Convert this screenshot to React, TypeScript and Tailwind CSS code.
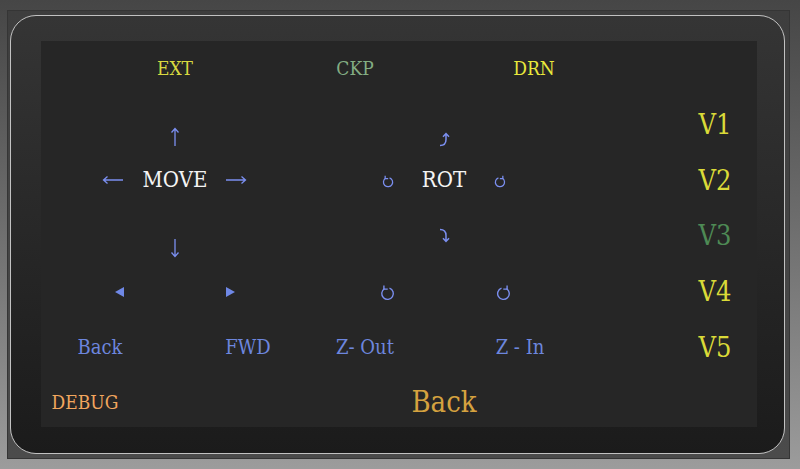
import type { ReactNode } from 'react';

const ARROW = '#7b8ff0';

const Cell = ({ className, children }: { className: string; children: ReactNode }) => (
  <div className={`flex items-center justify-center whitespace-nowrap leading-none ${className}`}>
    {children}
  </div>
);

const ArrowH = ({ dir }: { dir: 'left' | 'right' }) => (
  <svg width="22" height="10" viewBox="0 0 22 10" fill="none" stroke={ARROW} strokeWidth="1.3">
    <g transform={dir === 'right' ? 'matrix(-1 0 0 1 22 0)' : undefined}>
      <path d="M21 5H1.5M5.5 1.5 1.5 5l4 3.5" />
    </g>
  </svg>
);

const ArrowV = ({ dir }: { dir: 'up' | 'down' }) => (
  <svg width="10" height="20" viewBox="0 0 10 20" fill="none" stroke={ARROW} strokeWidth="1.3">
    <g transform={dir === 'down' ? 'matrix(1 0 0 -1 0 20)' : undefined}>
      <path d="M5 19V1.5M1.5 5.5 5 1.5l3.5 4" />
    </g>
  </svg>
);

const Curl = ({ dir }: { dir: 'up' | 'down' }) => (
  <svg width="12" height="15" viewBox="0 0 12 15" fill="none" stroke={ARROW} strokeWidth="1.5">
    <g transform={dir === 'down' ? 'matrix(1 0 0 -1 0 15)' : undefined}>
      <path d="M2 13.5c4 0 6-2.5 6-6V2M5 4.8 8 1.6l3 3.2" />
    </g>
  </svg>
);

const Spin = ({ flip, size }: { flip?: boolean; size: 'sm' | 'lg' }) => (
  <svg
    width={size === 'lg' ? 15 : 12}
    height={size === 'lg' ? 19 : 15}
    viewBox="0 0 14 18"
    fill="none"
    stroke={ARROW}
    strokeWidth={size === 'lg' ? 1.3 : 1.5}
  >
    <g transform={flip ? 'matrix(-1 0 0 1 14 0)' : undefined}>
      <path d="M8.9 5.8A5.5 5.5 0 1 1 4 6.4" />
      <path d="M3.6 3.2v3.6h3.6" />
    </g>
  </svg>
);

const Tri = ({ dir }: { dir: 'left' | 'right' }) => (
  <svg width="9" height="10" viewBox="0 0 9 10">
    <polygon points={dir === 'left' ? '9,0 9,10 0,5' : '0,0 0,10 9,5'} fill="#6f88e6" />
  </svg>
);

const serif = "font-['DejaVu_Serif_Condensed','DejaVu_Serif',serif] font-stretch-condensed";

export default function App() {
  return (
    <div className="h-[469px] w-full overflow-hidden bg-linear-to-b from-[#464646] to-[#9c9c9c] pl-[7px] pt-[10px]">
      <div className="h-[449px] w-[783px] border border-[#353535] bg-linear-to-b from-[#3e3e3e] to-[#4b4b4b] pl-[2px] pt-[4px]">
        <div className="h-[439px] w-[775px] rounded-[26px] border border-[#c2c2c2] bg-linear-to-b from-[#353535] to-[#1b1b1b] pl-[30px] pt-[25px]">
          <div className="h-[386px] w-[716px] bg-[#262626]">
            <div
              className={`grid grid-cols-[24px_70px_5px_70px_3px_70px_47px_70px_9px_70px_6px_70px_125px_70px] grid-rows-[repeat(7,55.7px)] ${serif}`}
            >
              {/* row 1 */}
              <Cell className="col-start-4 row-start-1 text-[19px] text-[#d8d840]">EXT</Cell>
              <Cell className="col-start-8 row-start-1 -translate-x-[10px] text-[19px] text-[#83ad83]">CKP</Cell>
              <Cell className="col-start-12 row-start-1 translate-x-[14px] text-[19px] text-[#e8e83c]">DRN</Cell>

              {/* row 2 */}
              <Cell className="col-start-4 row-start-2 translate-y-[12px]">
                <ArrowV dir="up" />
              </Cell>
              <Cell className="col-start-10 row-start-2 translate-y-[15px]">
                <Curl dir="up" />
              </Cell>
              <Cell className="col-start-14 row-start-2 text-[27px] text-[#dada38]">V1</Cell>

              {/* row 3 */}
              <Cell className="col-start-2 row-start-3 translate-x-[13px]">
                <ArrowH dir="left" />
              </Cell>
              <Cell className="col-start-4 row-start-3 text-[22px] text-[#f4f4f4]">MOVE</Cell>
              <Cell className="col-start-6 row-start-3 -translate-x-[12px]">
                <ArrowH dir="right" />
              </Cell>
              <Cell className="col-start-8 row-start-3 translate-x-[23px]">
                <Spin size="sm" />
              </Cell>
              <Cell className="col-start-10 row-start-3 text-[22px] text-[#f4f4f4]">ROT</Cell>
              <Cell className="col-start-12 row-start-3 -translate-x-[20px]">
                <Spin size="sm" flip />
              </Cell>
              <Cell className="col-start-14 row-start-3 text-[27px] text-[#dada38]">V2</Cell>

              {/* row 4 */}
              <Cell className="col-start-4 row-start-4 translate-y-[12px]">
                <ArrowV dir="down" />
              </Cell>
              <Cell className="col-start-10 row-start-4">
                <Curl dir="down" />
              </Cell>
              <Cell className="col-start-14 row-start-4 text-[27px] text-[#4e8a55]">V3</Cell>

              {/* row 5 */}
              <Cell className="col-start-2 row-start-5 translate-x-[19px]">
                <Tri dir="left" />
              </Cell>
              <Cell className="col-start-6 row-start-5 -translate-x-[18px]">
                <Tri dir="right" />
              </Cell>
              <Cell className="col-start-8 row-start-5 translate-x-[22px]">
                <Spin size="lg" />
              </Cell>
              <Cell className="col-start-12 row-start-5 -translate-x-[17px]">
                <Spin size="lg" flip />
              </Cell>
              <Cell className="col-start-14 row-start-5 text-[27px] text-[#dada38]">V4</Cell>

              {/* row 6 */}
              <Cell className="col-start-2 row-start-6 text-[20px] text-[#6d86de]">Back</Cell>
              <Cell className="col-start-6 row-start-6 text-[20px] text-[#6d86de]">FWD</Cell>
              <Cell className="col-start-8 row-start-6 text-[20px] text-[#6d86de]">Z- Out</Cell>
              <Cell className="col-start-12 row-start-6 text-[20px] text-[#6d86de]">Z - In</Cell>
              <Cell className="col-start-14 row-start-6 text-[27px] text-[#dada38]">V5</Cell>

              {/* row 7 */}
              <Cell className="col-start-2 row-start-7 -translate-x-[15px] text-[19px] text-[#f2a65e]">DEBUG</Cell>
              <Cell className="col-start-10 row-start-7 text-[29px] text-[#d5a23f]">Back</Cell>
            </div>
          </div>
        </div>
      </div>
    </div>
  );
}
